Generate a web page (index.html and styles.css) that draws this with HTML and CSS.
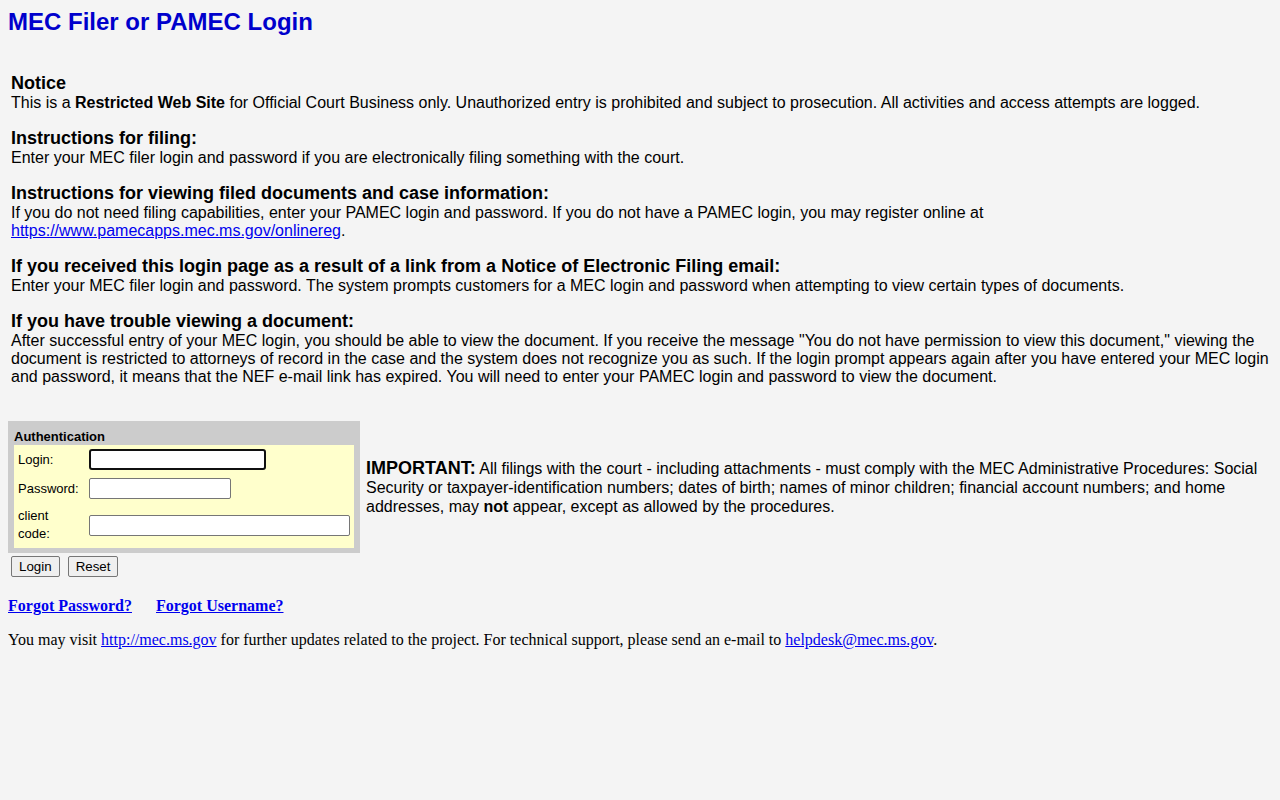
FILE: index.html
```html
<!DOCTYPE html>
<html>
<head>
<meta charset="utf-8">
<title>MEC Filer or PAMEC Login</title>
<link rel="stylesheet" href="styles.css">
</head>
<body>
<h1 class="title">MEC Filer or PAMEC Login</h1>

<div class="info">
  <div class="section">
    <div class="head">Notice</div>
    <div class="text">This is a <b>Restricted Web Site</b> for Official Court Business only. Unauthorized entry is prohibited and subject to prosecution. All activities and access attempts are logged.</div>
  </div>
  <div class="section">
    <div class="head">Instructions for filing:</div>
    <div class="text">Enter your MEC filer login and password if you are electronically filing something with the court.</div>
  </div>
  <div class="section">
    <div class="head">Instructions for viewing filed documents and case information:</div>
    <div class="text">If you do not need filing capabilities, enter your PAMEC login and password. If you do not have a PAMEC login, you may register online at<br><a href="#">https://www.pamecapps.mec.ms.gov/onlinereg</a>.</div>
  </div>
  <div class="section">
    <div class="head">If you received this login page as a result of a link from a Notice of Electronic Filing email:</div>
    <div class="text">Enter your MEC filer login and password. The system prompts customers for a MEC login and password when attempting to view certain types of documents.</div>
  </div>
  <div class="section">
    <div class="head">If you have trouble viewing a document:</div>
    <div class="text">After successful entry of your MEC login, you should be able to view the document. If you receive the message "You do not have permission to view this document," viewing the document is restricted to attorneys of record in the case and the system does not recognize you as such. If the login prompt appears again after you have entered your MEC login and password, it means that the NEF e-mail link has expired. You will need to enter your PAMEC login and password to view the document.</div>
  </div>
</div>

<form class="login-form" onsubmit="return false;">
  <div class="auth-row">
    <div class="auth-box">
      <div class="auth-title">Authentication</div>
      <div class="auth-fields">
        <div class="field">
          <label class="lbl">Login:</label>
          <input type="text" class="inp inp-login focused">
        </div>
        <div class="field">
          <label class="lbl">Password:</label>
          <input type="password" class="inp inp-pass">
        </div>
        <div class="field">
          <label class="lbl">client<br>code:</label>
          <input type="text" class="inp inp-client">
        </div>
      </div>
    </div>
    <div class="important"><b class="imp">IMPORTANT:</b> All filings with the court - including attachments - must comply with the MEC Administrative Procedures: Social Security or taxpayer-identification numbers; dates of birth; names of minor children; financial account numbers; and home addresses, may <b>not</b> appear, except as allowed by the procedures.</div>
  </div>
  <div class="buttons">
    <button type="button" class="btn">Login</button>
    <button type="reset" class="btn">Reset</button>
  </div>
</form>

<div class="forgot">
  <a href="#">Forgot Password?</a>
  <a href="#" class="second">Forgot Username?</a>
</div>

<p class="footer">You may visit <a href="#">http://mec.ms.gov</a> for further updates related to the project. For technical support, please send an e-mail to <a href="#">helpdesk@mec.ms.gov</a>.</p>
</body>
</html>
```

FILE: styles.css
```css
html, body {
  background: #f4f4f4;
}
body {
  margin: 8px;
  font-family: "Liberation Serif", "Times New Roman", serif;
  font-size: 16px;
  color: #000;
}
a {
  color: #0000ee;
}
.title {
  margin: 0;
  font-family: "Liberation Sans", Arial, sans-serif;
  font-size: 24px;
  line-height: 28px;
  font-weight: bold;
  color: #0000cc;
}
.info {
  margin-top: 37px;
  padding: 0 3px;
  font-family: "Liberation Sans", Arial, sans-serif;
}
.section {
  margin-bottom: 16px;
}
.section:last-child {
  margin-bottom: 0;
}
.head {
  font-weight: bold;
  font-size: 18px;
  line-height: 21px;
}
.text {
  font-size: 16px;
  line-height: 18px;
}
.login-form {
  margin: 35px 0 0 0;
  font-family: "Liberation Sans", Arial, sans-serif;
}
.auth-row {
  display: flex;
  align-items: center;
}
.auth-box {
  flex: 0 0 auto;
  width: 352px;
  box-sizing: border-box;
  background: #cccccc;
  padding: 8px 6px 5px 6px;
}
.auth-title {
  font-size: 13px;
  font-weight: bold;
  line-height: 15px;
  margin-bottom: 1px;
}
.auth-fields {
  background: #ffffcc;
  padding: 0 0 1px 0;
  display: flex;
  flex-direction: column;
}
.field {
  display: flex;
  align-items: center;
  padding: 4px 4px;
}
.lbl {
  width: 71px;
  flex: 0 0 71px;
  font-size: 13px;
  line-height: 18px;
}
.inp {
  box-sizing: border-box;
  height: 21px;
  border: 1px solid #767676;
  border-radius: 2px;
  background: #fff;
  padding: 1px 2px;
  font-size: 13px;
  margin: 0;
}
.inp-login {
  width: 177px;
}
.focused {
  border: 2px solid #101010;
  border-radius: 3px;
  outline: none;
}
.inp-pass {
  width: 142px;
}
.inp-client {
  width: 261px;
}
.important {
  flex: 1 1 auto;
  padding-left: 6px;
  font-size: 16px;
  line-height: 19px;
}
.imp {
  font-size: 18px;
}
.buttons {
  display: flex;
  gap: 8px;
  padding: 3px 0 0 3px;
}
.btn {
  font-family: "Liberation Sans", Arial, sans-serif;
  font-size: 13.33px;
  height: 21px;
  padding: 1px 7px;
  background: #efefef;
  border: 1px solid #767676;
  border-radius: 2px;
  color: #000;
}
.forgot {
  margin-top: 20px;
  font-weight: bold;
  font-size: 16px;
  line-height: 18px;
}
.forgot .second {
  margin-left: 20px;
}
.footer {
  margin: 16px 0 0 0;
  line-height: 18px;
}
```
